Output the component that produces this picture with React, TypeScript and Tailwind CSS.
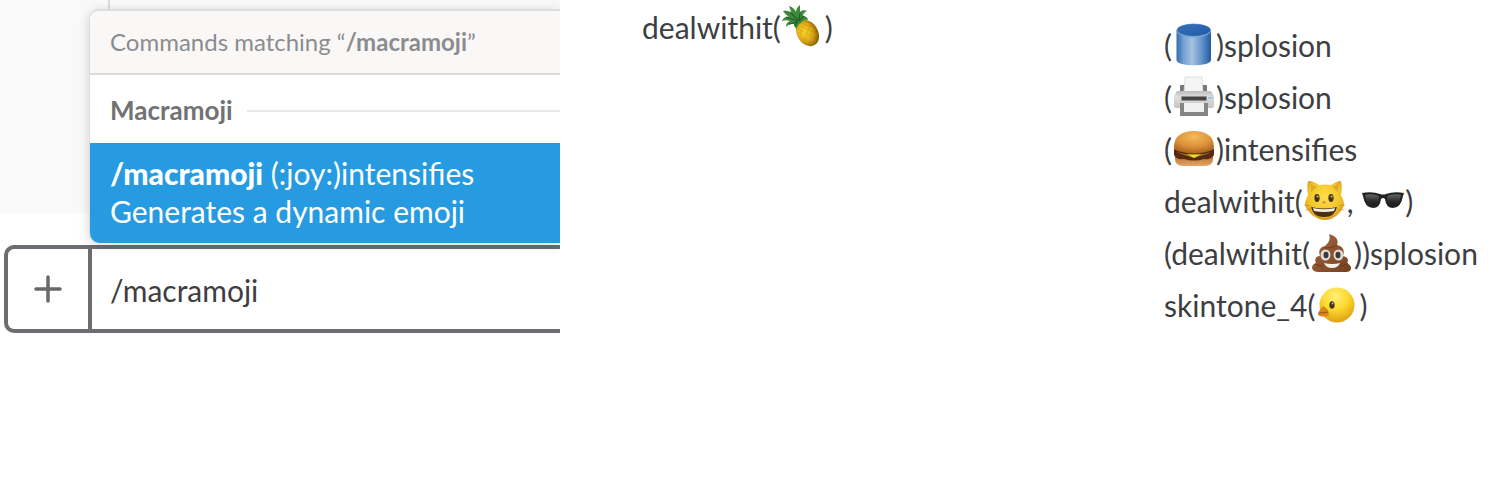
import React, { useState } from "react";

type IconProps = { label: string; children: React.ReactNode };

function Emoji({ label, children }: IconProps) {
  return (
    <svg role="img" aria-label={label} viewBox="0 0 44 44" className="size-11 shrink-0">
      {children}
    </svg>
  );
}

function Pineapple() {
  return (
    <Emoji label="pineapple">
      <defs>
        <radialGradient id="pine" cx="0.4" cy="0.4" r="0.6">
          <stop offset="0" stopColor="#f8d62e" />
          <stop offset="0.6" stopColor="#dfa914" />
          <stop offset="1" stopColor="#8a6208" />
        </radialGradient>
      </defs>
      <ellipse cx="26.5" cy="28" rx="10.5" ry="14" transform="rotate(-32 26.5 28)" fill="url(#pine)" />
      <g stroke="#b58410" strokeWidth="0.7" opacity="0.4" fill="none">
        <path d="M18 24l17 10M17 20l19 9M21 18l13 6M20 33l12 6M23 37l7-20M19 31l5-15M28 39l5-18M33 37l3-10" />
      </g>
      <path
        d="M20 18c-3 1-4 4-4 6-2-1-3-3-3-5-3 0-5 0-8 3 0-3 1-5 4-6-3-1-5-1-8 0 1-3 4-5 7-4-2-2-4-3-6-6 4-1 7 0 9 3-1-3-2-5-3-8 4 1 6 4 7 6 0-2 1-5 4-7 0 3 0 5 0 7 2-2 5-2 7-1-3 1-4 3-4 5 3 0 5 2 5 4-3-1-5 1-7 3z"
        fill="#3c8a3a"
      />
      <path d="M9 7l8 8M5 12l11 4M19 8l-1 8M8 19l9-2M14 21l3-6M23 11l-5 5" stroke="#1f5f2a" strokeWidth="1.2" fill="none" />
    </Emoji>
  );
}

function OilDrum() {
  return (
    <Emoji label="cylinder">
      <defs>
        <linearGradient id="drumSide" x1="0" x2="1" y1="0" y2="0">
          <stop offset="0" stopColor="#2f6bb3" />
          <stop offset="0.2" stopColor="#739fd1" />
          <stop offset="0.45" stopColor="#a6c3e0" />
          <stop offset="0.72" stopColor="#6696cb" />
          <stop offset="1" stopColor="#2259a2" />
        </linearGradient>
        <linearGradient id="drumTop" x1="0" x2="1" y1="0" y2="1">
          <stop offset="0" stopColor="#3873b8" />
          <stop offset="1" stopColor="#1f5ba6" />
        </linearGradient>
      </defs>
      <path d="M4.500 7v30c0 7 34.500 7 34.500 0V7z" fill="url(#drumSide)" />
      <ellipse cx="21.750" cy="7.500" rx="17.250" ry="7" fill="#7ba5d6" />
      <ellipse cx="21.750" cy="7" rx="16.500" ry="6" fill="url(#drumTop)" />
    </Emoji>
  );
}

function Printer() {
  return (
    <Emoji label="printer">
      <defs>
        <linearGradient id="printerBody" x1="0" x2="0" y1="0" y2="1">
          <stop offset="0" stopColor="#bcbcbc" />
          <stop offset="0.35" stopColor="#dedede" />
          <stop offset="1" stopColor="#c4c4c4" />
        </linearGradient>
      </defs>
      <rect x="8" y="10" width="27" height="8" rx="1" fill="#777" />
      <path d="M13 2h17l1 16H12z" fill="#f5f5f5" stroke="#d9d9d9" strokeWidth="0.8" />
      <path d="M5 16h34l3 5v10q0 2-2 2H4q-2 0-2-2V21z" fill="url(#printerBody)" />
      <rect x="9" y="21" width="26" height="5" rx="1" fill="#8f8f8f" />
      <rect x="10" y="22" width="24" height="3" fill="#444" />
      <rect x="36" y="22" width="5" height="1.6" fill="#8cc6ec" />
      <path d="M8 28h4v9h20v-9h4v13H8z" fill="#858585" />
      <path d="M12 28h20v9H12z" fill="#f0f0f0" />
    </Emoji>
  );
}

function Burger() {
  return (
    <Emoji label="hamburger">
      <defs>
        <radialGradient id="bun" cx="0.5" cy="0.25" r="0.75">
          <stop offset="0" stopColor="#f5b95c" />
          <stop offset="0.6" stopColor="#dc9138" />
          <stop offset="1" stopColor="#a9601d" />
        </radialGradient>
        <linearGradient id="bunBase" x1="0" x2="0" y1="0" y2="1">
          <stop offset="0" stopColor="#b56c29" />
          <stop offset="1" stopColor="#e3a868" />
        </linearGradient>
      </defs>
      <path d="M3 28h38v4q0 7-8 7H11q-8 0-8-7z" fill="url(#bunBase)" />
      <path d="M2 22h40v6q-3 5-10 4-10 3-20 0-8 1-10-4z" fill="#582812" />
      <path d="M4 25q18 5 36 0l-8 3-10 3-10-3z" fill="#8f7a14" />
      <path d="M15 27q7 1 14 0l-7 4z" fill="#efdc2b" />
      <path d="M2 20C2 9 10 4 22 4s20 5 20 16c0 3-3 4-8 5q-12 3-24 0c-5-1-8-2-8-5z" fill="url(#bun)" />
    </Emoji>
  );
}

function Cat() {
  return (
    <Emoji label="smiley cat">
      <defs>
        <radialGradient id="cat" cx="0.5" cy="0.4" r="0.6">
          <stop offset="0" stopColor="#ffdf45" />
          <stop offset="0.7" stopColor="#f0c42b" />
          <stop offset="1" stopColor="#d9981a" />
        </radialGradient>
      </defs>
      <path
        d="M5 2c4 0 8 2 11 4q6-1 12 0c3-2 7-4 10-4 1 5 1 9 0 14 2 4 3 7 3 10-2 7-10 15-19 15S4 33 2 26c0-3 1-6 3-10C4 11 4 7 5 2z"
        fill="url(#cat)"
      />
      <path d="M8 5l6 3-6 5zM35 5l-6 3 6 5z" fill="#cf8f2a" opacity="0.5" />
      <ellipse cx="14" cy="19" rx="2.6" ry="4" fill="#453317" />
      <ellipse cx="28" cy="19" rx="2.6" ry="4" fill="#453317" />
      <circle cx="14.6" cy="17.5" r="1" fill="#fff" opacity="0.7" />
      <circle cx="28.6" cy="17.5" r="1" fill="#fff" opacity="0.7" />
      <path d="M19 23q2-1.500 4 0l-2 2z" fill="#d77a68" />
      <path d="M8 28q13 3 26 0-2 10-13 10T8 28z" fill="#4a3013" />
      <path d="M10 29q11 2.500 22 0l-1 3q-10 2-20 0z" fill="#f2efe6" />
      <path d="M1 26l7 1M2 31l6-1M42 26l-7 1M41 31l-6-1" stroke="#c58a1e" strokeWidth="0.6" />
    </Emoji>
  );
}

function Sunglasses() {
  return (
    <Emoji label="sunglasses">
      <defs>
        <linearGradient id="lens" x1="0" x2="0" y1="0" y2="1">
          <stop offset="0" stopColor="#666" />
          <stop offset="0.6" stopColor="#2a2a2a" />
          <stop offset="1" stopColor="#1c1c1c" />
        </linearGradient>
      </defs>
      <path d="M1 14q10-2 18 1 3 1 6 0 8-3 18-1l-1 3q-2 12-10 12-7 0-8-9-2-2-4 0-1 9-8 9Q4 29 2 17z" fill="#222" />
      <path d="M4 16q7-2 14 1 0 10-6 10-6 0-8-11zM40 16q-7-2-14 1 0 10 6 10 6 0 8-11z" fill="url(#lens)" />
    </Emoji>
  );
}

function Poop() {
  return (
    <Emoji label="pile of poo">
      <defs>
        <linearGradient id="poo" x1="0" x2="1" y1="0" y2="1">
          <stop offset="0" stopColor="#a0663f" />
          <stop offset="0.6" stopColor="#8a502d" />
          <stop offset="1" stopColor="#70401f" />
        </linearGradient>
      </defs>
      <path
        d="M19 3c7 2 10 6 8 11 6 1 8 6 6 11 5 1 6 4 4 7 6 3 5 9-1 9H8c-7 0-8-7-2-9-2-4 0-7 4-7-2-5 0-9 5-10 3-3 6-6 4-12z"
        fill="url(#poo)"
      />
      <path d="M14 17q7 1 13-3M5 33q4 2 8 2M38 32q-4 3-8 3" stroke="#633317" strokeWidth="0.800" fill="none" />
      <ellipse cx="15.500" cy="24" rx="5" ry="5.500" fill="#dedad4" />
      <ellipse cx="28.500" cy="24" rx="5" ry="5.500" fill="#dedad4" />
      <ellipse cx="16" cy="24" rx="2.500" ry="3.200" fill="#3b393b" />
      <ellipse cx="28" cy="24" rx="2.500" ry="3.200" fill="#3b393b" />
      <path d="M14 32q8 2 16 0-2 5-8 5t-8-5z" fill="#f6f2ea" />
    </Emoji>
  );
}

function Chick() {
  return (
    <Emoji label="baby chick">
      <defs>
        <radialGradient id="chick" cx="0.45" cy="0.25" r="0.75">
          <stop offset="0" stopColor="#fff07a" />
          <stop offset="0.5" stopColor="#fcd92f" />
          <stop offset="1" stopColor="#dfa013" />
        </radialGradient>
      </defs>
      <circle cx="22" cy="22" r="17.500" fill="url(#chick)" />
      <path d="M8 23c-2 3-5 5-5 9 3 2 8 2 11 0 0-4-2-7-6-9z" fill="#d9861b" />
      <path d="M4 30q5 0 9-1" stroke="#9c5710" strokeWidth="1.200" fill="none" />
      <ellipse cx="17" cy="22" rx="2.600" ry="3.800" fill="#3f3311" />
      <circle cx="17.600" cy="20.500" r="0.900" fill="#fff" opacity="0.700" />
    </Emoji>
  );
}

function Row({ children }: { children: React.ReactNode }) {
  return <li className="flex h-13 items-center whitespace-pre">{children}</li>;
}

function Composer() {
  const [text, setText] = useState("/macramoji");
  return (
    <section className="relative overflow-hidden pb-2">
      <div className="h-[213px] bg-[#f9f9f9] pl-[108px]">
        <div className="h-full border-l-2 border-[#dcdcdc]" />
      </div>
      <form className="mt-8 ml-1 flex h-[88px] rounded-l-[10px] border-4 border-r-0 border-[#6c6d70] bg-white">
        <button type="button" aria-label="Add attachment" className="flex w-20 shrink-0 items-center justify-center">
          <svg viewBox="0 0 28 28" className="size-7" fill="none" stroke="#68696c" strokeWidth="3.5" strokeLinecap="round">
            <path d="M14 2v24M2 14h24" />
          </svg>
        </button>
        <input
          aria-label="Message"
          value={text}
          onChange={(e) => setText(e.target.value)}
          className="min-w-0 flex-1 border-l-4 border-[#6c6d70] pt-0.5 pl-[18px] outline-none"
        />
      </form>
      <div className="absolute top-[9px] right-0 left-[89px] overflow-hidden rounded-l-[10px] border-t-2 border-l border-[#dcdcdc] bg-white shadow-[0_2px_12px_rgba(0,0,0,0.16)]">
        <div className="flex h-16 items-center border-b-2 border-[#dcdcdc] bg-[#f9f8f7] pl-5 text-[24px] whitespace-pre text-[#8b8c8f]">
          Commands matching “<b>/macramoji</b>”
        </div>
        <div className="flex h-17 items-center gap-3.5 pt-1 pl-5">
          <h2 className="pb-0.5 text-[26px] font-bold text-[#717274]">Macramoji</h2>
          <div className="h-0.5 flex-1 bg-[#e8e8e8]" />
        </div>
        <button type="button" className="block h-25 w-full bg-[#269be2] pb-0.5 pl-5 text-left leading-[38px] text-white">
          <b className="font-black">/macramoji</b> (:joy:)intensifies
          <br />
          Generates a dynamic emoji
        </button>
      </div>
    </section>
  );
}

export default function App() {
  return (
    <main className="grid min-h-screen grid-cols-[560fr_522fr_418fr] items-start bg-white font-['Lato',sans-serif] text-[30px] text-[#3d3e42]">
      <Composer />
      <ul className="pt-px pl-[82px]">
        <Row>
          dealwithit(
          <Pineapple />)
        </Row>
      </ul>
      <ul className="pt-[19px] pl-[82px]">
        <Row>
          (<OilDrum />
          )splosion
        </Row>
        <Row>
          (<Printer />
          )splosion
        </Row>
        <Row>
          (<Burger />
          )intensifies
        </Row>
        <Row>
          dealwithit(
          <Cat />
          {", "}
          <Sunglasses />)
        </Row>
        <Row>
          (dealwithit(
          <Poop />
          ))splosion
        </Row>
        <Row>
          skintone_4(
          <Chick />)
        </Row>
      </ul>
    </main>
  );
}
